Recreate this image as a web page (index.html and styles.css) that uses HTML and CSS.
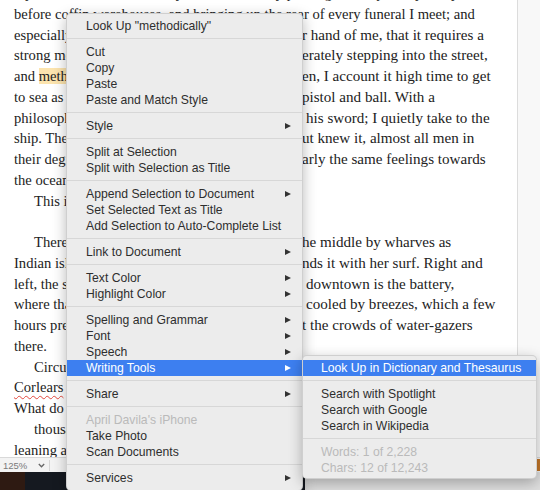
FILE: index.html
```html
<!DOCTYPE html>
<html>
<head>
<meta charset="utf-8">
<title>Context menu</title>
<link rel="stylesheet" href="styles.css">
</head>
<body>
<div class="window">
  <div class="doc-area">
    <div class="page">
      <div class="text">
        <div class="ln">my soul; whenever I find myself involuntarily pausing, and especially every time</div>
        <div class="ln">before coffin warehouses, and bringing up the rear of every funeral I meet; and</div>
        <div class="ln split"><span class="a">especially whenever my hypos get such an uppe</span><span class="b">r hand of me, that it requires a</span></div>
        <div class="ln split"><span class="a">strong moral principle to prevent me from delib</span><span class="b">erately stepping into the street,</span></div>
        <div class="ln split"><span class="a">and <span class="hl">methodically</span> knocking people's hats off—th</span><span class="b">en, I account it high time to get</span></div>
        <div class="ln split"><span class="a">to sea as soon as I can. This is my substitute for</span><span class="b">pistol and ball. With a</span></div>
        <div class="ln split"><span class="a">philosophical flourish Cato throws himself upon</span><span class="b lead">his sword; I quietly take to the</span></div>
        <div class="ln split"><span class="a">ship. There is nothing surprising in this. If they b</span><span class="b">ut knew it, almost all men in</span></div>
        <div class="ln split"><span class="a">their degree, some time or other, cherish very ne</span><span class="b">arly the same feelings towards</span></div>
        <div class="ln">the ocean with me.</div>
        <div class="ln ind">This is my substitute for pistol and ball.</div>
        <div class="ln"></div>
        <div class="ln split"><span class="a ind">There now is your insular city of the Manhattoes, belted round in t</span><span class="b">he middle by wharves as</span></div>
        <div class="ln split"><span class="a">Indian isles by coral reefs—commerce surrou</span><span class="b">nds it with her surf. Right and</span></div>
        <div class="ln split"><span class="a">left, the streets take you waterward. Its extreme</span><span class="b lead">downtown is the battery,</span></div>
        <div class="ln split"><span class="a">where that noble mole is washed by waves, and</span><span class="b lead">cooled by breezes, which a few</span></div>
        <div class="ln split"><span class="a">hours previous were out of sight of land. Look a</span><span class="b">t the crowds of water-gazers</span></div>
        <div class="ln">there.</div>
        <div class="ln ind">Circumambulate the city of a dreamy Sabbath afternoon. Go from</div>
        <div class="ln"><span class="typo">Corlears</span> Hook to Coenties Slip, and from thence, by Whitehall,</div>
        <div class="ln">What do you see?—Posted like silent sentinels all around the town,</div>
        <div class="ln ind">thousands upon thousands of mortal men fixed in ocean reveries. Some</div>
        <div class="ln">leaning against the spiles; some seated upon the pier-heads; some</div>
      </div>
    </div>
    <div class="side"></div>
  </div>
  <div class="status">
    <span class="zoom">125%</span>
    <svg class="chev" width="7" height="5" viewBox="0 0 7 5"><path d="M0.8 1 L3.5 3.8 L6.2 1" fill="none" stroke="#666" stroke-width="1.3"/></svg>
    <span class="divider"></span>
    <span class="badge"></span>
  </div>
  <div class="dock">
    <span class="dock-a"></span>
    <span class="dock-b"></span>
    <span class="dock-c"></span>
  </div>
</div>

<div class="menu main">
  <div class="item">Look Up "methodically"</div>
  <div class="sep"></div>
  <div class="item">Cut</div>
  <div class="item">Copy</div>
  <div class="item">Paste</div>
  <div class="item">Paste and Match Style</div>
  <div class="sep"></div>
  <div class="item">Style<span class="arr"></span></div>
  <div class="sep"></div>
  <div class="item">Split at Selection</div>
  <div class="item">Split with Selection as Title</div>
  <div class="sep"></div>
  <div class="item">Append Selection to Document<span class="arr"></span></div>
  <div class="item">Set Selected Text as Title</div>
  <div class="item">Add Selection to Auto-Complete List</div>
  <div class="sep"></div>
  <div class="item">Link to Document<span class="arr"></span></div>
  <div class="sep"></div>
  <div class="item">Text Color<span class="arr"></span></div>
  <div class="item">Highlight Color<span class="arr"></span></div>
  <div class="sep"></div>
  <div class="item">Spelling and Grammar<span class="arr"></span></div>
  <div class="item">Font<span class="arr"></span></div>
  <div class="item">Speech<span class="arr"></span></div>
  <div class="item active">Writing Tools<span class="arr"></span></div>
  <div class="sep"></div>
  <div class="item">Share<span class="arr"></span></div>
  <div class="sep"></div>
  <div class="item disabled">April Davila's iPhone</div>
  <div class="item">Take Photo</div>
  <div class="item">Scan Documents</div>
  <div class="sep"></div>
  <div class="item">Services<span class="arr"></span></div>
</div>

<div class="menu sub">
  <div class="item active">Look Up in Dictionary and Thesaurus</div>
  <div class="sep"></div>
  <div class="item">Search with Spotlight</div>
  <div class="item">Search with Google</div>
  <div class="item">Search in Wikipedia</div>
  <div class="sep"></div>
  <div class="item disabled">Words: 1 of 2,228</div>
  <div class="item disabled">Chars: 12 of 12,243</div>
</div>
</body>
</html>
```

FILE: styles.css
```css
html, body {
  margin: 0;
  padding: 0;
}

body {
  width: 540px;
  height: 490px;
  overflow: hidden;
  position: relative;
  background: #f2f2f2;
  font-family: "Liberation Sans", Arial, sans-serif;
}

.window {
  display: flex;
  flex-direction: column;
  height: 490px;
}

.doc-area {
  display: flex;
  height: 457px;
  overflow: hidden;
}

.page {
  width: 517px;
  background: #ffffff;
  border-right: 1px solid #dcdcdc;
  overflow: hidden;
}

.side {
  flex: 1;
  background: #f8f8f8;
}

.text {
  margin-top: -17px;
  padding-left: 14px;
  font-family: "Liberation Serif", "Times New Roman", serif;
  font-size: 14.6px;
  line-height: 20.76px;
  color: #222222;
}

.ln {
  white-space: nowrap;
  height: 20.76px;
}

.split {
  display: grid;
  grid-template-columns: 288px auto;
}

.split .a {
  overflow: hidden;
}

.split .b {
  font-size: 15.1px;
}

.lead {
  padding-left: 4px;
}

.ind {
  padding-left: 20px;
}

.hl {
  background: #fce4ae;
}

.typo {
  text-decoration: underline wavy #e2473c;
  text-decoration-thickness: 1px;
  text-underline-offset: 3px;
}

.status {
  height: 14px;
  display: flex;
  align-items: center;
  background: #f3f3f3;
  border-top: 1px solid #d9d9d9;
  font-size: 9.5px;
  color: #7a7a7a;
}

.zoom {
  margin-left: 3px;
}

.chev {
  margin-left: 11px;
}

.divider {
  width: 1px;
  height: 11px;
  background: #d6d6d6;
  margin-left: 4px;
}

.badge {
  margin-left: auto;
  width: 3px;
  height: 12px;
  background: #c27628;
}

.dock {
  height: 18px;
  display: flex;
}

.dock-a {
  width: 25px;
  background: #2e1a12;
}

.dock-b {
  width: 280px;
  background: #151920;
}

.dock-c {
  flex: 1;
  background: #dedede;
}

/* Menus */
.menu {
  position: absolute;
  background: #ececec;
  border: 1px solid rgba(0, 0, 0, 0.12);
  border-radius: 5px;
  box-shadow: 0 4px 14px rgba(0, 0, 0, 0.28);
  font-size: 12.2px;
  color: #2e2e2e;
}

.main {
  left: 66px;
  top: 13px;
  width: 235px;
  padding: 4px 0;
}

.sub {
  left: 302px;
  top: 355px;
  width: 233px;
  padding: 4px 0 2px;
}

.item {
  height: 16px;
  line-height: 16px;
  padding: 0 11px 0 19px;
  display: flex;
  justify-content: space-between;
  align-items: center;
  white-space: nowrap;
}

.sub .item {
  padding-left: 18px;
}

.item.active {
  background: #3d7ff0;
  color: #ffffff;
}

.item.disabled {
  color: #bababa;
}

.arr {
  width: 0;
  height: 0;
  border-left: 6px solid #333333;
  border-top: 3.5px solid transparent;
  border-bottom: 3.5px solid transparent;
}

.active .arr {
  border-left-color: #ffffff;
}

.sep {
  height: 1px;
  background: #d7d7d7;
  margin: 4px 0 5px;
}
```
